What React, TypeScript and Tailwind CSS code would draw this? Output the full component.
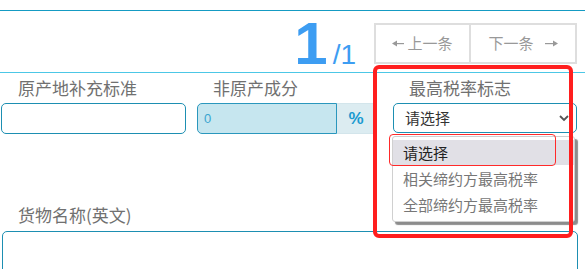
import React from "react";

const cjk = "font-['Noto_Sans_CJK_SC','Noto_Sans',sans-serif]";

function ArrowLeft() {
  return (
    <svg width="12" height="7" viewBox="0 0 12 7" className="mr-[3px]">
      <polygon points="0,3.5 5,0.5 5,6.5" fill="#999" />
      <rect x="4" y="3" width="8" height="1.2" fill="#999" />
    </svg>
  );
}
function ArrowRight() {
  return (
    <svg width="13" height="7" viewBox="0 0 13 7" className="ml-[11px]">
      <rect x="0" y="3" width="8" height="1.2" fill="#999" />
      <polygon points="13,3.5 8,0.5 8,6.5" fill="#999" />
    </svg>
  );
}

export default function App() {
  return (
    <div className={`relative w-[585px] h-[269px] overflow-hidden bg-white ${cjk}`}>
      <div className="h-[10px]" />
      {/* header */}
      <div className="h-[63px] border-t border-b border-t-[#159bc3] border-b-[#4cc7e6] flex justify-end items-start pr-[8px]">
        <div className="flex items-baseline mt-[3px] mr-[18px] text-[#3d9df2] font-['Liberation_Sans',sans-serif]">
          <span className="text-[60px] leading-none font-bold">1</span>
          <span className="text-[28px] leading-none ml-[5px]">/1</span>
        </div>
        <div className="flex mt-[12px]">
          <div className="w-[97px] h-[41px] border-2 border-[#dedede] flex items-center justify-center text-[15px] text-[#999]">
            <ArrowLeft />
            <span>上一条</span>
          </div>
          <div className="w-[106px] h-[41px] border-2 border-l-0 border-[#dedede] flex items-center justify-center text-[15px] text-[#999]">
            <span>下一条</span>
            <ArrowRight />
          </div>
        </div>
      </div>

      {/* fields row */}
      <div className="flex pl-[1px] text-[#707070]">
        <div className="w-[185px]">
          <div className="h-[30px] leading-[30px] text-[17px] pl-[17px]">原产地补充标准</div>
          <div className="h-[31px] rounded-[5px] border border-[#1d8fb2]" />
        </div>
        <div className="w-[178px] ml-[11px]">
          <div className="h-[30px] leading-[30px] text-[17px] pl-[16px]">非原产成分</div>
          <div className="h-[31px] flex">
            <div className="w-[140px] h-full rounded-l-[5px] border border-[#2a97bd] bg-[#c6e6ef] flex items-center pl-[6px] text-[13px] text-[#3aa5cf] font-['Liberation_Sans',sans-serif]">
              0
            </div>
            <div className="flex-1 h-full bg-[#dcecf1] border-t border-b border-[#d3e5eb] flex items-center justify-center text-[17px] font-bold text-[#1a9ad0] font-['Liberation_Sans',sans-serif]">
              %
            </div>
          </div>
        </div>
        <div className="w-[184px] ml-[18px]">
          <div className="h-[30px] leading-[30px] text-[17px] pl-[16px]">最高税率标志</div>
          <div className="h-[30px] rounded-[5px] border border-[#1d8fb2] flex items-center justify-between pl-[11px] pr-[7px] text-[15px] text-[#333]">
            <span>请选择</span>
            <svg width="10" height="7" viewBox="0 0 10 7">
              <polyline points="1,1 5,5 9,1" fill="none" stroke="#555" strokeWidth="1.8" />
            </svg>
          </div>
        </div>
      </div>

      {/* english name */}
      <div className="mt-[66px] h-[31px] leading-[30px] text-[17px] pl-[18px] text-[#707070]">货物名称(英文)</div>
      <div className="ml-[2px] w-[576px] h-[60px] rounded-[5px] border border-[#1d8fb2]" />

      {/* open dropdown menu */}
      <div className="absolute left-[392px] top-[136px] w-[183px] h-[86px] bg-white border border-[#d0d0d0] rounded-[3px] shadow-[3px_3px_1px_rgba(0,0,0,0.45)] pt-[3px] text-[15px]">
        <div className="h-[25px] leading-[25px] bg-[#e1e0e6] pl-[10px] text-[#222]">请选择</div>
        <div className="h-[26px] leading-[26px] pl-[10px] mt-[1px] text-[#777]">相关缔约方最高税率</div>
        <div className="h-[26px] leading-[26px] pl-[10px] text-[#777]">全部缔约方最高税率</div>
      </div>

      {/* annotations */}
      <div className="absolute left-[389px] top-[134px] w-[167px] h-[32px] border border-[#ff2a2a] rounded-[4px]" />
      <div className="absolute left-[373px] top-[65px] w-[200px] h-[173px] border-[4px] border-[#ff1e1e] rounded-[6px]" />
    </div>
  );
}
